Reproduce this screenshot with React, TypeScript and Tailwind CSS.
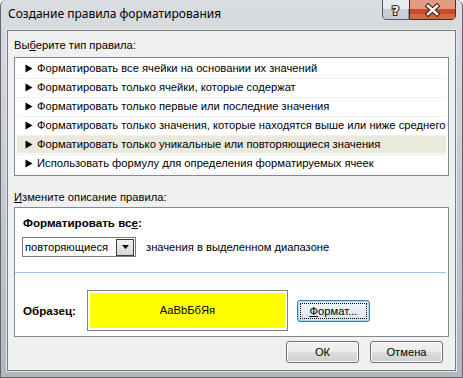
import React from "react";

const rows = [
  "Форматировать все ячейки на основании их значений",
  "Форматировать только ячейки, которые содержат",
  "Форматировать только первые или последние значения",
  "Форматировать только значения, которые находятся выше или ниже среднего",
  "Форматировать только уникальные или повторяющиеся значения",
  "Использовать формулу для определения форматируемых ячеек",
];

function Tri() {
  return (
    <svg width="8" height="9" viewBox="0 0 8 9" className="shrink-0">
      <polygon points="0.5,0.5 7.5,4.5 0.5,8.5" fill="#000" />
    </svg>
  );
}

function CloseBtn() {
  return (
    <svg width="47" height="20" viewBox="0 0 47 20" className="block shrink-0">
      <path d="M0.5 0 V19.5 H42 Q46.5 19.5 46.5 15 V0 Z" fill="#c94b2c" stroke="#4d2a22" strokeWidth="1" />
      <rect x="1" y="0" width="45" height="9" fill="#e59a82" />
      <rect x="1" y="14" width="45" height="5" fill="#d4683f" />
      <path d="M19 6 L28 14 M28 6 L19 14" stroke="#3a1a12" strokeWidth="4.6" strokeLinecap="square" />
      <path d="M19 6 L28 14 M28 6 L19 14" stroke="#ffffff" strokeWidth="2.6" strokeLinecap="square" />
    </svg>
  );
}

function HelpBtn() {
  return (
    <svg width="27" height="20" viewBox="0 0 27 20" className="block shrink-0">
      <path d="M0.5 0 V15 Q0.5 19.5 5 19.5 H27 V0 Z" fill="#c9cfd6" stroke="#505a66" strokeWidth="1" />
      <rect x="1" y="0" width="26" height="9" fill="#e8ecf0" />
      <text
        x="13.5"
        y="15"
        textAnchor="middle"
        fontFamily="DejaVu Sans, sans-serif"
        fontWeight="bold"
        fontSize="13"
        fill="#ffffff"
        stroke="#2a2a2a"
        strokeWidth="2.2"
        paintOrder="stroke"
      >
        ?
      </text>
    </svg>
  );
}

export default function App() {
  return (
    <div className="w-[463px] h-[378px] flex flex-col overflow-hidden rounded-t-[6px] border-x border-b border-[#5f666d] bg-linear-to-b from-[#d9dde2] via-[#c6cbd1] to-[#b2b7bd] font-['Liberation_Sans',sans-serif] text-[11.2px] text-black">
      {/* Title bar */}
      <div className="h-[30px] shrink-0 flex items-start justify-between pr-[6px]">
        <div className="pl-[7px] pt-[6px] font-['Noto_Sans',sans-serif] text-[12px] leading-[16px] text-black">
          Создание правила форматирования
        </div>
        <div className="flex">
          <HelpBtn />
          <CloseBtn />
        </div>
      </div>

      {/* Client area */}
      <div className="mx-[6px] h-[341px] shrink-0 border border-[#767b80] bg-[#f0f0f0] shadow-[0_0_0_1px_#e6e9ec] flex flex-col px-[6px]">
        <div className="pt-[7px] leading-[14px]">
          Вы<span className="underline">б</span>ерите тип правила:
        </div>
        <div className="mt-[5px] h-[119px] border border-[#828790] bg-white pt-[2px] px-[2px]">
          {rows.map((r, i) => (
            <div key={i} className="h-[19px] border-b border-[#f0f0f0]">
              <div
                className={`h-[17px] flex items-center gap-[4px] pl-[8px] whitespace-nowrap ${
                  i === 4 ? "bg-[#ebe8dc]" : ""
                }`}
              >
                <Tri />
                <span>{r}</span>
              </div>
            </div>
          ))}
        </div>

        <div className="mt-[14px] leading-[14px]">
          <span className="underline">И</span>змените описание правила:
        </div>
        <div className="mt-[3px] h-[130px] border border-[#828790] bg-white flex flex-col">
          <div className="pt-[8px] pl-[8px] leading-[14px] font-bold text-[11.6px]">
            Форматировать вс<span className="underline">е</span>:
          </div>
          <div className="mt-[7px] ml-[7px] flex items-center">
            <div className="w-[114px] h-[20px] border border-[#7a7a7a] bg-white flex items-center justify-between pl-[2px] pr-[1px]">
              <span className="leading-[14px]">повторяющиеся</span>
              <div className="w-[18px] h-[17px] border border-[#3d3d3d] bg-linear-to-b from-[#f4f4f4] via-[#e6e6e6] to-[#d4d4d4] flex items-center justify-center">
                <svg width="7" height="4" viewBox="0 0 7 4">
                  <polygon points="0,0 7,0 3.5,4" fill="#000" />
                </svg>
              </div>
            </div>
            <span className="ml-[10px] leading-[14px]">значения в выделенном диапазоне</span>
          </div>
          <div className="mt-[15px] mr-[2px] h-px bg-[#a3c6ee]" />
          <div className="mt-[17px] pl-[8px] flex items-center">
            <div className="w-[64px] font-bold text-[11.6px] leading-[14px]">Образец:</div>
            <div className="w-[201px] h-[41px] border border-[#828282] bg-white p-[2px]">
              <div className="h-full bg-[#ffff00] flex items-center justify-center">
                AaBbБбЯя
              </div>
            </div>
            <div className="ml-[9px] w-[73px] h-[22px] rounded-[3px] border border-[#3c7fb1] bg-linear-to-b from-[#f2f8fc] via-[#e4eef6] to-[#d4e2ee] shadow-[inset_0_0_0_1px_#9fd8f8] p-[2px]">
              <div className="h-full border border-dotted border-black flex items-center justify-center leading-[14px]">
                <span className="underline">Ф</span>ормат...
              </div>
            </div>
          </div>
        </div>

        <div className="mt-[4px] flex justify-end gap-[11px] pr-[6px]">
          <div className="w-[73px] h-[22px] rounded-[3px] border border-[#707070] bg-[linear-gradient(180deg,#f2f2f2_0%,#ebebeb_50%,#dddddd_50%,#cfcfcf_100%)] shadow-[inset_0_0_0_1px_#fcfcfc] flex items-center justify-center">
            ОК
          </div>
          <div className="w-[73px] h-[22px] rounded-[3px] border border-[#707070] bg-[linear-gradient(180deg,#f2f2f2_0%,#ebebeb_50%,#dddddd_50%,#cfcfcf_100%)] shadow-[inset_0_0_0_1px_#fcfcfc] flex items-center justify-center">
            Отмена
          </div>
        </div>
      </div>
    </div>
  );
}
